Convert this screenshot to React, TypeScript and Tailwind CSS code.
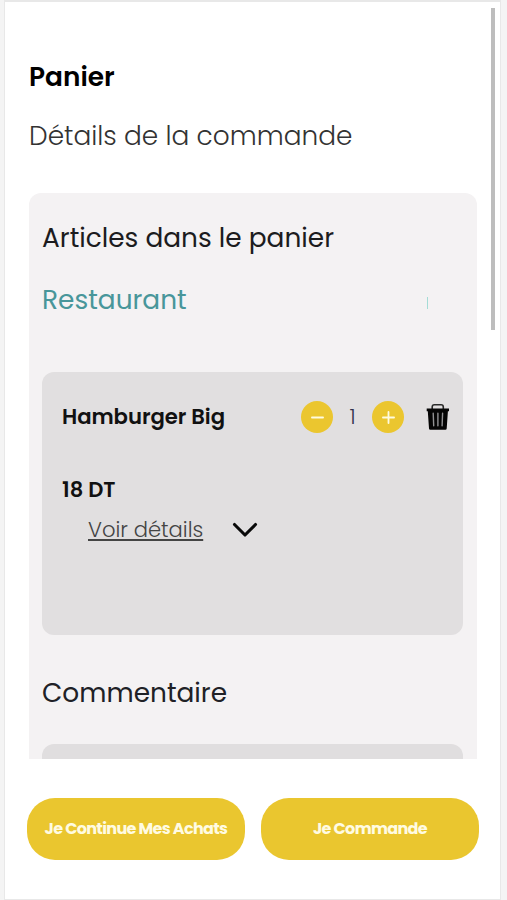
import { Minus, Plus } from "lucide-react";

const TrashIcon = () => (
  <svg width="24" height="28" viewBox="0 0 24 28" fill="none">
    <path d="M6.2 6V4Q6.2 1.8 8.4 1.8H15.1Q17.3 1.8 17.3 4V6" stroke="#2a2a2a" strokeWidth="1.6" />
    <path d="M0.7 5.4H23V8.2H21.9L20.7 25.6Q20.6 26.8 19.4 26.8H4.3Q3.1 26.8 3 25.6L1.8 8.2H0.7Z" fill="#050505" />
    <path d="M7.2 10.3L7.7 22.7M11.9 10.3V22.7M16.6 10.3L16.1 22.7" stroke="#929294" strokeWidth="1.4" strokeLinecap="round" />
  </svg>
);

const CartItem = () => {
  return (
    <div className="mt-[54px] h-[263px] rounded-xl bg-[#e1dfe0] pl-5 pr-[13px] pt-[29px]">
      <div className="flex h-8 items-center">
        <h3 className="text-[21.2px] font-semibold leading-8 tracking-[-0.05px] text-[#111]">Hamburger Big</h3>
        <div className="ml-auto flex items-center">
          <button className="flex size-8 items-center justify-center rounded-full bg-[#ebc62f] text-[#fffbe0]">
            <Minus className="size-[19px]" strokeWidth={2.3} />
          </button>
          <span className="w-[39px] text-center text-[21px] font-light text-[#33334d]">1</span>
          <button className="flex size-8 items-center justify-center rounded-full bg-[#ebc62f] text-[#fffbe0]">
            <Plus className="size-[19px]" strokeWidth={2.3} />
          </button>
          <button className="ml-[22px]">
            <TrashIcon />
          </button>
        </div>
      </div>

      <p className="mt-[41px] text-[21.1px] font-semibold leading-8 text-[#111]">18 DT</p>

      <div className="mt-2 flex h-8 items-center pl-[26px]">
        <span className="text-[21.1px] font-light leading-8 text-[#444] underline decoration-[1.5px] underline-offset-[2px]">
          Voir détails
        </span>
        <svg className="ml-[29px]" width="26" height="16" viewBox="0 0 26 16" fill="none">
          <path d="M2.5 2.5L13 13L23.5 2.5" stroke="#090909" strokeWidth="3.1" strokeLinecap="round" strokeLinejoin="round" />
        </svg>
      </div>
    </div>
  );
};

export default function App() {
  return (
    <div className="h-[900px] w-[507px] overflow-hidden bg-[#f4f4f4] pl-1 pr-1.5 font-['Poppins','Inter',sans-serif]">
      <div className="relative flex h-[900px] flex-col border-x border-b border-t-2 border-[#e8e8e8] bg-white">
        <div className="absolute right-[5px] top-1.5 h-[322px] w-1 bg-[#bdbdbd]" />

        <header className="pl-6">
          <h1 className="mt-[57px] text-[26.4px] font-semibold leading-9 text-black">Panier</h1>
          <h2 className="mt-[23px] text-[26.4px] font-light leading-9 text-[#333]">Détails de la commande</h2>
        </header>

        <main className="ml-6 mt-[39px] h-[566px] w-[448px] overflow-hidden rounded-t-xl bg-[#f4f2f3] pl-[13px] pr-3.5">
          <h2 className="mt-[27px] text-[26.4px] leading-9 text-[#1c1c1e]">Articles dans le panier</h2>
          <div className="mt-[26px] flex h-9 items-center justify-between">
            <span className="text-[26.4px] leading-9 text-[#48969a]">Restaurant</span>
            <span className="mr-[35px] mt-1.5 h-3 w-px bg-[#a4dcd6]" />
          </div>

          <CartItem />

          <h2 className="mt-[40px] text-[26.4px] leading-9 text-[#202126]">Commentaire</h2>
          <div className="mt-[33px] h-[120px] rounded-xl bg-[#e0dedf]" />
        </main>

        <footer className="ml-[22px] mt-[39px] flex gap-4">
          <button className="h-[62px] w-[218px] rounded-[28px] bg-[#eac62f] text-[16px] font-bold tracking-[-0.65px] text-[#fffbe2]">
            Je Continue Mes Achats
          </button>
          <button className="h-[62px] w-[218px] rounded-[28px] bg-[#eac62f] text-[16px] font-bold tracking-[-0.65px] text-[#fffbe2]">
            Je Commande
          </button>
        </footer>
      </div>
    </div>
  );
}
